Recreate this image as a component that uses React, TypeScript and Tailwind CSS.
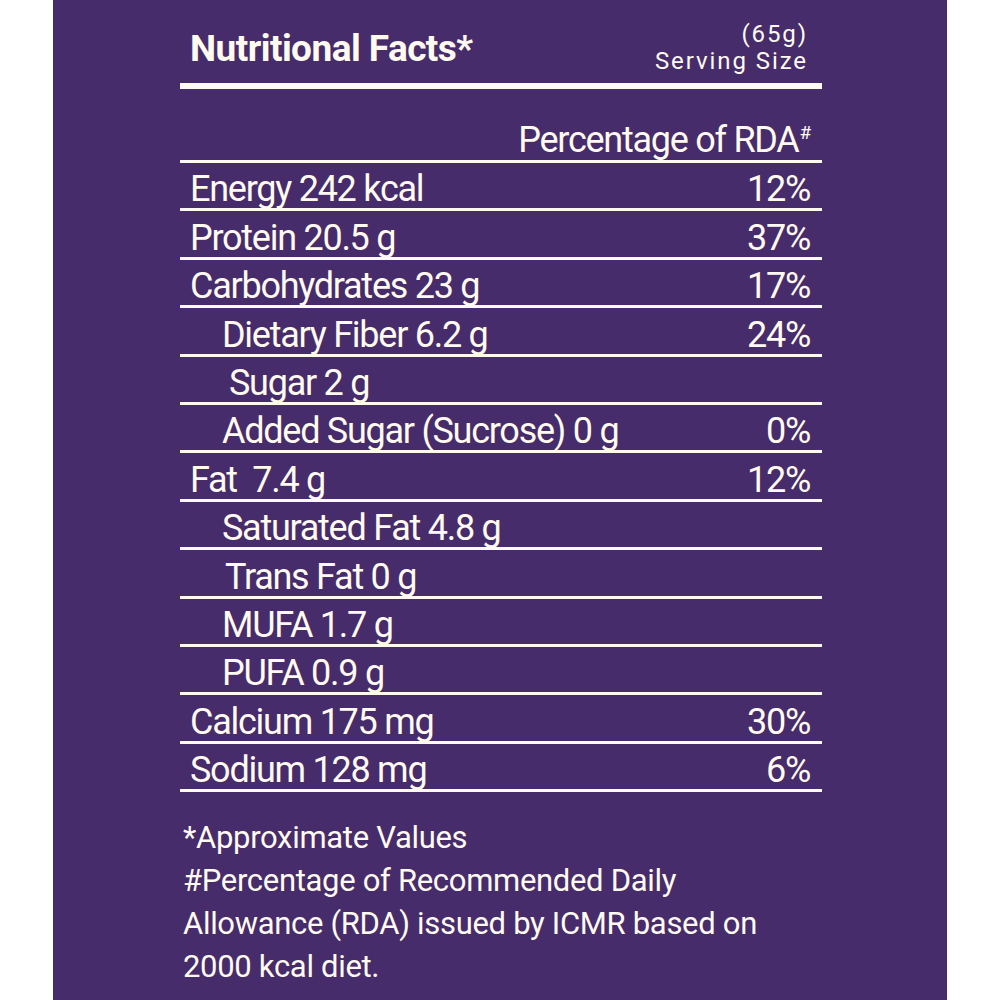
const ROWS: { label: string; pct?: string; indent?: string }[] = [
  { label: "Energy 242 kcal", pct: "12%" },
  { label: "Protein 20.5 g", pct: "37%" },
  { label: "Carbohydrates 23 g", pct: "17%" },
  { label: "Dietary Fiber 6.2 g", pct: "24%", indent: "pl-[42px]" },
  { label: "Sugar 2 g", indent: "pl-[49px]" },
  { label: "Added Sugar (Sucrose) 0 g", pct: "0%", indent: "pl-[42px]" },
  { label: "Fat  7.4 g", pct: "12%" },
  { label: "Saturated Fat 4.8 g", indent: "pl-[42px]" },
  { label: "Trans Fat 0 g", indent: "pl-[45px]" },
  { label: "MUFA 1.7 g", indent: "pl-[42px]" },
  { label: "PUFA 0.9 g", indent: "pl-[42px]" },
  { label: "Calcium 175 mg", pct: "30%" },
  { label: "Sodium 128 mg", pct: "6%" },
];

function App() {
  return (
    <div className="min-h-screen bg-white font-['Roboto',sans-serif] text-[#fffaf0]">
      <div className="mx-[53px] min-h-screen bg-[#462c6b] pl-[127px] pb-4">
        <div className="w-[642px]">
          <div className="flex h-[83px] items-start justify-between px-[10px]">
            <h1 className="mt-[29px] text-[37px] font-bold leading-[40px] tracking-[-0.015em]">
              Nutritional Facts*
            </h1>
            <div className="mt-[21px] flex flex-col items-end pr-[4px] text-[24px] leading-[27px] tracking-[0.08em]">
              <span>(65g)</span>
              <span>Serving Size</span>
            </div>
          </div>
          <div className="h-[6px] bg-[#fffaf0]" />
          <div className="flex h-[74px] items-end justify-end border-b-[3px] border-[#fffaf0] pr-[12px] text-[36px] leading-[40px] tracking-[-0.035em]">
            <span>
              Percentage of RDA
              <span className="ml-[1px] align-[13px] text-[19px] leading-none">#</span>
            </span>
          </div>
          {ROWS.map(({ label, pct, indent }) => (
            <div
              key={label}
              className={`flex h-[48.4px] items-end justify-between border-b-[3px] border-[#fffaf0] pr-[12px] text-[36px] leading-[38px] tracking-[-0.035em] ${indent ?? "pl-[10px]"}`}
            >
              <span className="whitespace-pre">{label}</span>
              {pct && <span>{pct}</span>}
            </div>
          ))}
          <div className="mt-[24px] pl-[3px] text-[31px] leading-[43px] tracking-[-0.01em]">
            <p>*Approximate Values</p>
            <p>
              #Percentage of Recommended Daily
              <br />
              Allowance (RDA) issued by ICMR based on
              <br />
              2000 kcal diet.
            </p>
          </div>
        </div>
      </div>
    </div>
  );
}

export default App;
